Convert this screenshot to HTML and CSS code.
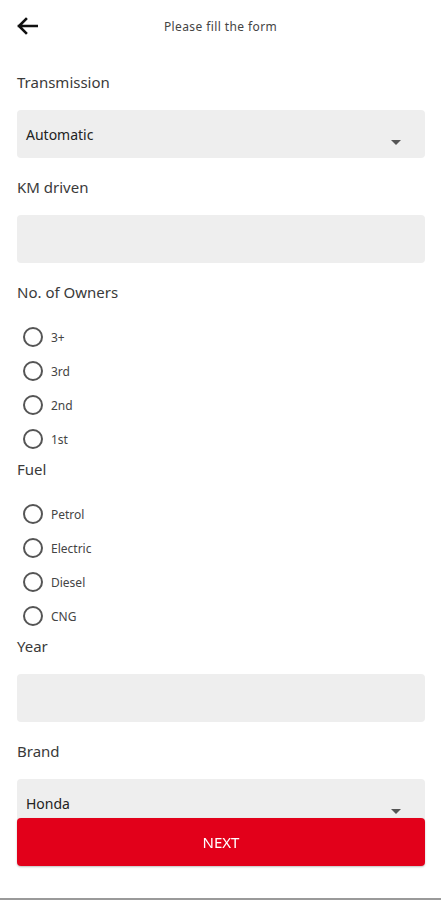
FILE: index.html
```html
<!DOCTYPE html>
<html>
<head>
<meta charset="utf-8">
<link rel="stylesheet" href="styles.css">
</head>
<body>
<header class="topbar">
  <svg class="back" width="22" height="18" viewBox="0 0 22 18"><path d="M21 9H3M10 2L3 9l7 7" fill="none" stroke="#111" stroke-width="2.6" stroke-linecap="square"/></svg>
  <div class="title">Please fill the form</div>
</header>
<main class="form">
  <div class="label">Transmission</div>
  <div class="field select"><span>Automatic</span><i class="caret"></i></div>

  <div class="label">KM driven</div>
  <div class="field"></div>

  <div class="label">No. of Owners</div>
  <div class="radios">
    <div class="radio"><span class="dot"></span><span>3+</span></div>
    <div class="radio"><span class="dot"></span><span>3rd</span></div>
    <div class="radio"><span class="dot"></span><span>2nd</span></div>
    <div class="radio"><span class="dot"></span><span>1st</span></div>
  </div>

  <div class="label">Fuel</div>
  <div class="radios radios-fuel">
    <div class="radio"><span class="dot"></span><span>Petrol</span></div>
    <div class="radio"><span class="dot"></span><span>Electric</span></div>
    <div class="radio"><span class="dot"></span><span>Diesel</span></div>
    <div class="radio"><span class="dot"></span><span>CNG</span></div>
  </div>

  <div class="label">Year</div>
  <div class="field"></div>

  <div class="label">Brand</div>
  <div class="field select"><span>Honda</span><i class="caret"></i></div>
</main>
<button class="next">NEXT</button>
<div class="bottomline"></div>
</body>
</html>
```
FILE: styles.css
```css
* { box-sizing: border-box; }
html, body { margin: 0; padding: 0; background: #fff; overflow: hidden; }
body {
  font-family: "Noto Sans", "Open Sans", sans-serif;
  color: #333;
  height: 900px;
}
.topbar {
  height: 52px;
  display: flex;
  align-items: center;
  padding-left: 16px;
  position: relative;
}
.back { display: block; margin-top: -1px; }
.title {
  position: absolute;
  left: 0; right: 0;
  top: 18px;
  text-align: center;
  font-size: 12px;
  line-height: 18px;
  letter-spacing: 0.4px;
  color: #444;
}
.form {
  padding: 20px 16px 0 17px;
}
.label {
  font-size: 15px;
  line-height: 20px;
  color: #3a3a3a;
  margin-bottom: 18px;
}
.field {
  height: 48px;
  background: #eeeeee;
  border-radius: 4px;
  margin-bottom: 19px;
  position: relative;
}
.select {
  display: flex;
  align-items: center;
  padding-left: 9px;
  font-size: 14px;
  color: #222;
}
.select span { margin-top: 1px; }
.caret {
  position: absolute;
  right: 24px;
  top: 30px;
  width: 0; height: 0;
  border-left: 5px solid transparent;
  border-right: 5px solid transparent;
  border-top: 5px solid #555;
}
.radios {
  margin-bottom: 3px;
}
.radios-fuel { margin-top: 1px; }
.radio {
  height: 34px;
  display: flex;
  align-items: center;
  padding-left: 6px;
  font-size: 12px;
  color: #444;
}
.dot {
  width: 20px; height: 20px;
  border: 2px solid #555;
  border-radius: 50%;
  margin-right: 8px;
  flex: none;
}
.next {
  position: fixed;
  left: 17px;
  right: 16px;
  top: 818px;
  height: 48px;
  background: #e2001a;
  color: #fff;
  border: none;
  border-radius: 4px;
  font-family: "Noto Sans", "Open Sans", sans-serif;
  font-size: 15px;
  box-shadow: 0 1px 2px rgba(0,0,0,0.25);
}
.bottomline {
  position: fixed;
  left: 0; right: 0; bottom: 0;
  height: 2px;
  background: #9a9a9a;
}
```
